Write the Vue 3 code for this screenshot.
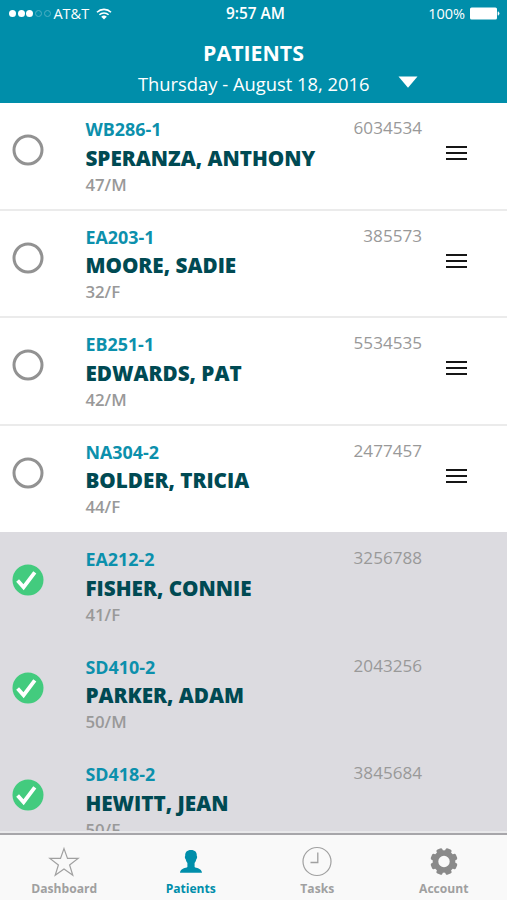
<template>
  <div class="app">
    <header class="header">
      <div class="status-bar">
        <div class="status-left">
          <span v-for="n in 5" :key="n" class="dot" :class="{ empty: n > 3 }"></span>
          <span class="carrier">AT&amp;T</span>
          <svg class="wifi" viewBox="0 0 16 12">
            <path d="M1 4.2a10 10 0 0 1 14 0M3.4 6.8a6.6 6.6 0 0 1 9.2 0" fill="none" stroke="#fff" stroke-width="1.6" />
            <path d="M8 11.6L5.2 8.8a4 4 0 0 1 5.6 0z" fill="#fff" />
          </svg>
        </div>
        <div class="clock">9:57 AM</div>
        <div class="status-right">
          <span class="percent">100%</span>
          <svg class="battery" viewBox="0 0 30 13">
            <rect x="0" y="0.5" width="27" height="12" rx="1.6" fill="#fff" />
            <path d="M28 4.7a2 2 0 0 1 0 3.6z" fill="#fff" stroke="#fff" stroke-width="0.6" />
          </svg>
        </div>
      </div>
      <h1 class="title">PATIENTS</h1>
      <div class="date-bar">
        <span class="date">Thursday - August 18, 2016</span>
        <svg class="arrow" viewBox="0 0 20 12"><path d="M0.5 0.5h19L10 11.8z" fill="#fff" /></svg>
      </div>
    </header>

    <main class="list">
      <div v-for="item in patients" :key="item.mrn" class="row" :class="{ done: item.done }" @click="toggle(item)">
        <svg class="check" viewBox="0 0 32 32">
          <template v-if="item.done">
            <circle cx="16" cy="16" r="15.5" fill="#43cb7e" />
            <path d="M5.6 16.4l6 6.8L22.8 8.4" fill="none" stroke="#fff" stroke-width="3.8" />
          </template>
          <circle v-else cx="16" cy="16" r="14" fill="#fff" stroke="#929292" stroke-width="3" />
        </svg>
        <div class="info">
          <div class="room">{{ item.room }}</div>
          <div class="name">{{ item.name }}</div>
          <div class="age">{{ item.age }}</div>
        </div>
        <div class="mrn">{{ item.mrn }}</div>
        <div class="handle" v-if="!item.done">
          <span></span>
          <span></span>
          <span></span>
        </div>
      </div>
    </main>

    <nav class="tabs">
      <div v-for="tab in tabs" :key="tab" class="tab" :class="{ active: tab == curTab }" @click="curTab = tab">
        <svg v-if="tab == 'Dashboard'" class="tab-icon" viewBox="0 0 32 32">
          <path d="M16 2.6l3.5 9.8h10.6l-8.5 6.5 3.2 10.4L16 23.1l-8.8 6.2 3.2-10.4-8.5-6.5h10.6z" fill="none" stroke="currentColor" stroke-width="1.2" />
        </svg>
        <svg v-else-if="tab == 'Patients'" class="tab-icon" viewBox="0 0 32 32">
          <path d="M16 4c4 0 6.100 2.300 5.800 6c.6.500.4 2.500-.5 3.200c-.4 1.900-1 2.900-1.700 3.800v4c1.200 1.200 7.100.9 7.400 5.800H5c.3-4.900 6.200-4.600 7.400-5.800v-4c-.7-.9-1.300-1.900-1.700-3.800c-.9-.7-1.100-2.700-.5-3.200C9.900 6.300 12 4 16 4z" fill="currentColor" />
        </svg>
        <svg v-else-if="tab == 'Tasks'" class="tab-icon" viewBox="0 0 32 32">
          <circle cx="16" cy="15.5" r="14" fill="none" stroke="currentColor" stroke-width="1.2" />
          <path d="M16.8 6.5v10H9.5" fill="none" stroke="currentColor" stroke-width="1.3" />
        </svg>
        <svg v-else class="tab-icon" viewBox="0 0 32 32">
          <circle cx="16" cy="15.5" r="8.5" fill="none" stroke="#8a8a8a" stroke-width="5.6" />
          <rect v-for="n in 8" :key="n" x="12.8" y="1.9" width="6.4" height="5" rx="1.8" fill="#8a8a8a" :transform="`rotate(${n * 45 + 22.5} 16 15.5)`" />
        </svg>
        <span class="tab-text">{{ tab }}</span>
      </div>
    </nav>
  </div>
</template>

<script setup>
import { ref, reactive } from 'vue'

const patients = reactive([
  { room: 'WB286-1', name: 'SPERANZA, ANTHONY', age: '47/M', mrn: '6034534', done: false },
  { room: 'EA203-1', name: 'MOORE, SADIE', age: '32/F', mrn: '385573', done: false },
  { room: 'EB251-1', name: 'EDWARDS, PAT', age: '42/M', mrn: '5534535', done: false },
  { room: 'NA304-2', name: 'BOLDER, TRICIA', age: '44/F', mrn: '2477457', done: false },
  { room: 'EA212-2', name: 'FISHER, CONNIE', age: '41/F', mrn: '3256788', done: true },
  { room: 'SD410-2', name: 'PARKER, ADAM', age: '50/M', mrn: '2043256', done: true },
  { room: 'SD418-2', name: 'HEWITT, JEAN', age: '50/F', mrn: '3845684', done: true }
])

const tabs = ['Dashboard', 'Patients', 'Tasks', 'Account']
const curTab = ref('Patients')

function toggle(item) {
  item.done = !item.done
}
</script>

<style>
body {
  margin: 0;
}
</style>

<style scoped>
.app {
  width: 507px;
  height: 900px;
  display: flex;
  flex-direction: column;
  overflow: hidden;
  background: #fff;
  font-family: "Open Sans", "Liberation Sans", sans-serif;
}

.header {
  flex: none;
  height: 103px;
  background: #008eaa;
  color: #fff;
}

.status-bar {
  display: grid;
  grid-template-columns: 1fr auto 1fr;
  align-items: center;
  height: 27px;
  padding: 0 7px 0 9px;
}

.status-left,
.status-right {
  display: flex;
  align-items: center;
}

.status-right {
  justify-content: flex-end;
}

.dot {
  box-sizing: border-box;
  width: 7px;
  height: 7px;
  margin-right: 1.7px;
  border-radius: 50%;
  background: #fff;
}

.dot.empty {
  background: none;
  border: 1px solid #4fb0c4;
}

.carrier {
  margin-left: 1px;
  font-size: 14.5px;
}

.wifi {
  width: 16px;
  height: 12px;
  margin-left: 7px;
}

.clock {
  margin-left: 2px;
  font-size: 15.4px;
  line-height: 20px;
  font-weight: 600;
}

.percent {
  font-size: 14.5px;
}

.battery {
  width: 30px;
  height: 13px;
  margin-left: 5px;
}

.title {
  margin: 11px 0 0;
  text-align: center;
  font-size: 21.3px;
  line-height: 30px;
  font-weight: 700;
}

.date-bar {
  display: flex;
  align-items: center;
  height: 30px;
  padding-left: 138px;
}

.date {
  font-size: 18.35px;
}

.arrow {
  width: 20px;
  height: 12px;
  margin: 0 0 3px 29px;
}

.list {
  flex: 1;
  min-height: 0;
  overflow: hidden;
  border-bottom: 2px solid #e9e9eb;
}

.row {
  box-sizing: border-box;
  display: flex;
  height: 107.5px;
  padding: 14px 40px 0 12.4px;
  border-bottom: 2px solid #ebebeb;
}

.row.done {
  background: #dcdbe0;
  border-bottom-color: #dcdbe0;
}

/* last open row has no divider */
.row:nth-child(4) {
  height: 106.5px;
  border-bottom: none;
}

.row:nth-child(5) {
  height: 108.5px;
  padding-top: 15px;
}

.check {
  width: 32px;
  height: 32px;
  margin-top: 17.4px;
}

.info {
  flex: 1;
  margin-left: 41px;
  white-space: nowrap;
}

.room {
  font-size: 17.9px;
  line-height: 24px;
  font-weight: 700;
  color: #0c90ac;
}

.name {
  margin-top: 1.5px;
  font-size: 20.7px;
  line-height: 30px;
  font-weight: 800;
  color: #004a53;
}

.age {
  font-size: 16.8px;
  line-height: 24px;
  font-weight: 600;
  color: #999;
}

.mrn {
  margin-top: 1px;
  font-size: 17.1px;
  line-height: 20px;
  color: #999;
}

.handle {
  display: flex;
  flex-direction: column;
  gap: 4px;
  width: 21px;
  margin: 29px 0 0 24px;
}

.handle span {
  height: 2px;
  background: #161616;
}

.done .mrn {
  margin-right: 45px;
}

.tabs {
  box-sizing: border-box;
  flex: none;
  display: flex;
  height: 67px;
  padding-left: 1px;
  border-top: 2px solid #a7a6aa;
  background: #f9f9f9;
}

.tab {
  flex: 1;
  display: flex;
  flex-direction: column;
  align-items: center;
  padding-top: 11px;
  color: #a0a0a0;
}

.tab.active {
  color: #008eaa;
}

.tab-icon {
  width: 32px;
  height: 32px;
}

.tab-text {
  margin-top: 1px;
  font-size: 12.1px;
  line-height: 19px;
  font-weight: 700;
}
</style>
